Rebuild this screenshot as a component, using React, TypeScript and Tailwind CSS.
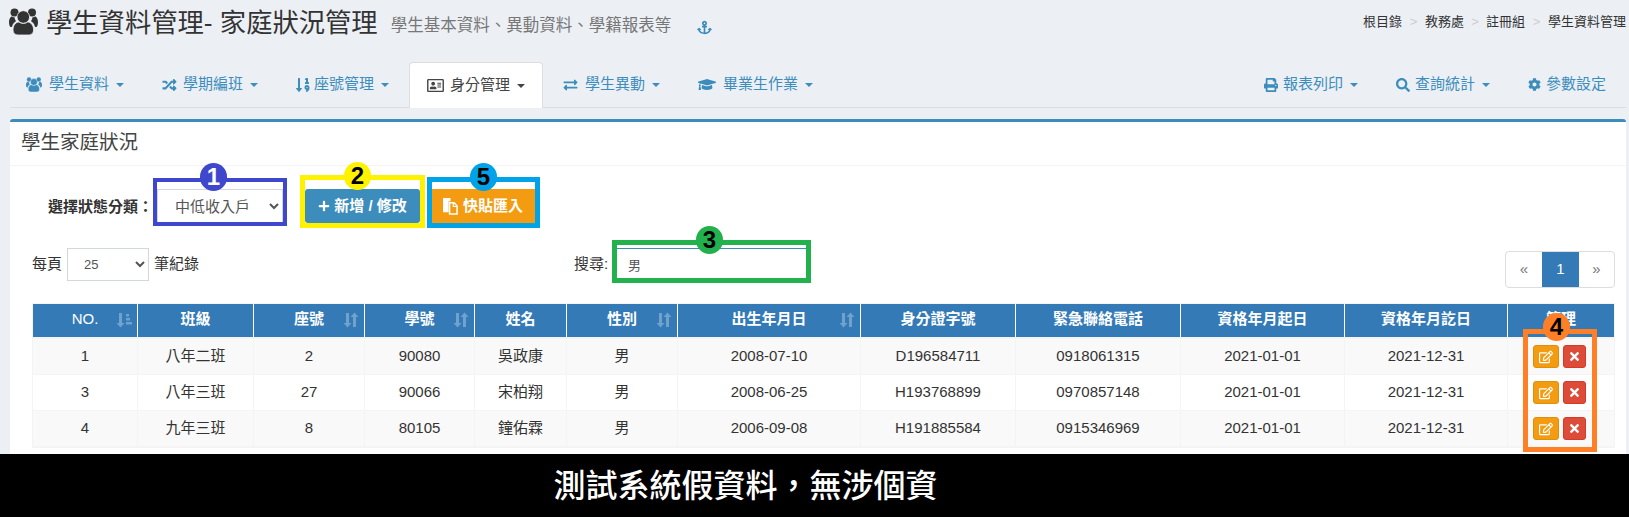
import { ReactNode } from "react";
import { IconType } from "react-icons";
import {
    FaAnchor,
    FaCog,
    FaExchangeAlt,
    FaGraduationCap,
    FaPlus,
    FaPrint,
    FaRandom,
    FaRegAddressCard,
    FaRegEdit,
    FaSearch,
    FaSortNumericDown,
    FaTimes,
} from "react-icons/fa";

const UsersIcon: IconType = ({ className }) => (
    <svg viewBox="0 0 29 27" fill="currentColor" className={className}>
        <circle cx="5.500" cy="4.500" r="4" />
        <circle cx="23" cy="4.500" r="4" />
        <path d="M0 14c0-3 1.500-5.500 3-5.500.5.300 1.500.8 2.500.8a8 8 0 0 0 1.500 4c-2 1-3.500 3-4 5.700H2C.8 19 0 17 0 14z" />
        <path d="M29 14c0-3-1.500-5.500-3-5.500-.5.300-1.500.8-2.500.8a8 8 0 0 1-1.500 4c2 1 3.500 3 4 5.700h1c1.200 0 2-2 2-5z" />
        <circle cx="14.300" cy="9" r="6.300" stroke="#ecf0f5" strokeWidth="0.800" />
        <path
            d="M4 22c0-5 3-8 6-8 1.500 1 3 1.500 4.300 1.500s2.800-.5 4.300-1.500c3 0 6 3 6 8 0 3-2 5-5 5H9c-3 0-5-2-5-5z"
            stroke="#ecf0f5"
            strokeWidth="0.800"
        />
    </svg>
);

const leftTabs: { text: string; Icon: IconType; iconClass: string; active?: boolean }[] = [
    { text: "學生資料", Icon: UsersIcon, iconClass: "w-[16px] h-[15px] mr-[7px]" },
    { text: "學期編班", Icon: FaRandom, iconClass: "w-[15px] h-[14px] mr-[6px]" },
    { text: "座號管理", Icon: FaSortNumericDown, iconClass: "w-[14px] h-[16px] mr-[4px]" },
    { text: "身分管理", Icon: FaRegAddressCard, iconClass: "w-[17px] h-[15px] mr-[6px]", active: true },
    { text: "學生異動", Icon: FaExchangeAlt, iconClass: "w-[15px] h-[14px] mr-[7px]" },
    { text: "畢業生作業", Icon: FaGraduationCap, iconClass: "w-[18px] h-[15px] mr-[7px]" },
];

const columns: { title: string; width: string; sort?: "asc" | "both"; latin?: boolean }[] = [
    { title: "NO.", width: "w-[105px]", sort: "asc", latin: true },
    { title: "班級", width: "w-[116px]" },
    { title: "座號", width: "w-[111px]", sort: "both" },
    { title: "學號", width: "w-[110px]", sort: "both" },
    { title: "姓名", width: "w-[92px]" },
    { title: "性別", width: "w-[111px]", sort: "both" },
    { title: "出生年月日", width: "w-[183px]", sort: "both" },
    { title: "身分證字號", width: "w-[155px]" },
    { title: "緊急聯絡電話", width: "w-[165px]" },
    { title: "資格年月起日", width: "w-[164px]" },
    { title: "資格年月訖日", width: "w-[163px]" },
    { title: "管理", width: "w-[106px]" },
];

const rows = [
    ["1", "八年二班", "2", "90080", "吳政康", "男", "2008-07-10", "D196584711", "0918061315", "2021-01-01", "2021-12-31"],
    ["3", "八年三班", "27", "90066", "宋柏翔", "男", "2008-06-25", "H193768899", "0970857148", "2021-01-01", "2021-12-31"],
    ["4", "九年三班", "8", "80105", "鐘佑霖", "男", "2006-09-08", "H191885584", "0915346969", "2021-01-01", "2021-12-31"],
];

const Caret = () => (
    <span className="ml-[7px] inline-block w-0 h-0 border-x-[4px] border-x-transparent border-t-[4px] border-t-current" />
);

const NavTab = ({
    text,
    Icon,
    iconClass,
    active,
    caret = true,
}: {
    text: string;
    Icon: IconType;
    iconClass: string;
    active?: boolean;
    caret?: boolean;
}) => (
    <div
        className={
            active
                ? "flex items-center h-[46px] px-[17px] -mx-[2px] bg-white text-[#444] border border-[#ddd] border-b-0 rounded-t-[4px] relative"
                : "flex items-center h-[45px] px-4 text-[#3c8dbc]"
        }
    >
        <Icon className={iconClass} />
        <span>{text}</span>
        {caret && <Caret />}
    </div>
);

const SortIcon = ({ kind }: { kind: "asc" | "both" }) => (
    <svg
        viewBox="0 0 16 16"
        className="absolute right-[5px] top-[8px] w-[16px] h-[16px] text-white opacity-30"
        fill="currentColor"
    >
        {kind === "asc" ? (
            <>
                <path d="M3 1h3v10h2.500L4.500 15.500 0.500 11H3z" />
                <path d="M10 2h3v2.500h-3zM10 6h4v2.500h-4zM10 10h6v2.500h-6z" />
            </>
        ) : (
            <>
                <path d="M3 1h3v10h2.500L4.500 15.500 0.500 11H3z" />
                <path d="M10 15V5H7.500l4-4.500 4 4.500H13v10z" />
            </>
        )}
    </svg>
);

const ActionButton = ({ color, children }: { color: string; children: ReactNode }) => (
    <span className={`inline-flex items-center justify-center h-[23px] rounded-[3px] text-white ${color}`}>{children}</span>
);

const Badge = ({ className, children }: { className: string; children: ReactNode }) => (
    <div
        className={`absolute flex items-center justify-center w-[27px] h-[28px] rounded-full text-[24px] font-bold leading-none ${className}`}
    >
        {children}
    </div>
);

export default function App() {
    return (
        <div className="relative flex flex-col w-[1629px] h-[517px] overflow-hidden bg-[#ecf0f5] font-['Liberation_Sans','Noto_Sans_CJK_TC',sans-serif] text-[15px] text-[#333]">
            {/* title */}
            <div className="flex items-center h-[62px] pl-[9px] pr-[3px] pb-[16px] shrink-0">
                <UsersIcon className="w-[29px] h-[27px] -mt-[4px] text-[#333]" />
                <h1 className="ml-[8px] text-[26.300px] leading-none text-[#333]">學生資料管理- 家庭狀況管理</h1>
                <span className="ml-[13px] mt-[4px] text-[16.500px] text-[#777]">學生基本資料、異動資料、學籍報表等</span>
                <FaAnchor className="ml-[26px] mt-[8px] w-[15px] h-[15px] text-[#3c8dbc]" />
                <div className="ml-auto flex items-center text-[13px] text-[#333] -mt-[2px]">
                    <span>根目錄</span>
                    <span className="w-[23px] text-center text-[#ccc]">&gt;</span>
                    <span>教務處</span>
                    <span className="w-[22px] text-center text-[#ccc]">&gt;</span>
                    <span>註冊組</span>
                    <span className="w-[23px] text-center text-[#ccc]">&gt;</span>
                    <span>學生資料管理</span>
                </div>
            </div>

            {/* tabs */}
            <div className="flex justify-between items-start h-[46px] mx-[10px] mr-[3px] border-b border-[#ddd] shrink-0">
                <div className="flex gap-[6px]">
                    {leftTabs.map((tab) => (
                        <NavTab key={tab.text} {...tab} />
                    ))}
                </div>
                <div className="flex gap-[6px] mr-[4px]">
                    <NavTab text="報表列印" Icon={FaPrint} iconClass="w-[14px] h-[14px] mr-[5px]" />
                    <NavTab text="查詢統計" Icon={FaSearch} iconClass="w-[14px] h-[14px] mr-[5px]" />
                    <NavTab text="參數設定" Icon={FaCog} iconClass="w-[13px] h-[13px] mr-[5px]" caret={false} />
                </div>
            </div>

            {/* panel */}
            <div className="flex-1 mt-[11px] ml-[10px] mr-[3px] bg-white border-t-[3px] border-[#3c8dbc] rounded-t-[3px] overflow-hidden">
                <div className="flex items-center h-[44px] pl-[11px] pb-[2px] text-[19.500px] text-[#444] border-b border-[#f4f4f4]">
                    學生家庭狀況
                </div>

                <div className="pl-[22px] pr-[11px] pt-[23px]">
                    <div className="flex items-start h-[59px]">
                        <label className="ml-[16px] mt-[7px] w-[109px] font-bold text-[#333] whitespace-nowrap">選擇狀態分類：</label>
                        <select className="w-[126px] h-[34px] pl-[13px] pr-[3px] bg-white border border-[#d2d6de] text-[#555]">
                            <option>中低收入戶</option>
                        </select>
                        <button className="flex items-center justify-center ml-[22px] w-[115px] h-[34px] bg-[#3c8dbc] rounded-[3px] font-bold text-white">
                            <FaPlus className="w-[12px] h-[12px] mr-[4px]" />
                            新增 / 修改
                        </button>
                        <button className="flex items-center justify-center ml-[11px] w-[104px] h-[34px] bg-[#f39c12] text-white font-bold">
                            <svg viewBox="0 0 16 18" className="w-[15px] h-[17px] mr-[5px]">
                                <path d="M0 0h8v3.500H6V15H0z" fill="currentColor" />
                                <path d="M7 5h5l3 3.500V17H7z" fill="none" stroke="currentColor" strokeWidth="1.600" />
                                <path d="M11 5v4h4" fill="none" stroke="currentColor" strokeWidth="1.300" />
                            </svg>
                            快貼匯入
                        </button>
                    </div>

                    <div className="flex items-start h-[56px]">
                        <span className="mt-[5px] w-[35px]">每頁</span>
                        <select className="w-[82px] h-[33px] pl-[12px] pr-[3px] bg-white border border-[#d2d6de] text-[13px] text-[#555]">
                            <option>25</option>
                        </select>
                        <span className="ml-[5px] mt-[5px] w-[47px]">筆紀錄</span>
                        <span className="ml-[373px] mt-[5px] w-[42px]">搜尋:</span>
                        <input
                            readOnly
                            value="男"
                            className="w-[192px] h-[32px] pl-[11px] border border-[#3c8dbc] text-[13px] text-[#555] outline-none"
                        />
                        <ul className="flex ml-auto mt-[3px] h-[37px] text-[#337ab7] border border-[#ddd] rounded-[4px]">
                            <li className="flex items-center justify-center w-[36px] text-[#777]">«</li>
                            <li className="flex items-center justify-center w-[37px] bg-[#337ab7] text-white">1</li>
                            <li className="flex items-center justify-center w-[35px] text-[#777]">»</li>
                        </ul>
                    </div>

                    <div className="border border-[#f4f4f4] w-[1583px] -mt-[1px]">
                        <table className="table-fixed w-full border-separate border-spacing-0 text-center text-[#333]">
                            <thead>
                                <tr>
                                    {columns.map((col) => (
                                        <th
                                            key={col.title}
                                            className={`relative h-[35px] pb-[2px] bg-[#337ab7] bg-clip-padding text-white border-b-2 border-b-[#f4f4f4] border-r border-r-white last:border-r-0 ${
                                                col.latin ? "font-normal" : "font-bold"
                                            } ${col.width}`}
                                        >
                                            {col.title}
                                            {col.sort && <SortIcon kind={col.sort} />}
                                        </th>
                                    ))}
                                </tr>
                            </thead>
                            <tbody>
                                {rows.map((row) => (
                                    <tr key={row[0]} className="odd:bg-[#f9f9f9]">
                                        {row.map((cell, i) => (
                                            <td key={i} className="h-[36px] border-r border-b border-[#f4f4f4]">
                                                {cell}
                                            </td>
                                        ))}
                                        <td className="h-[36px] border-b border-[#f4f4f4]">
                                            <div className="flex justify-center gap-[4px] pr-[3px]">
                                                <ActionButton color="w-[26px] bg-[#f39c12] border border-[#e08e0b]">
                                                    <FaRegEdit className="w-[14px] h-[14px]" />
                                                </ActionButton>
                                                <ActionButton color="w-[23px] bg-[#dd4b39] border border-[#d73925]">
                                                    <FaTimes className="w-[13px] h-[13px]" />
                                                </ActionButton>
                                            </div>
                                        </td>
                                    </tr>
                                ))}
                            </tbody>
                        </table>
                    </div>
                </div>
            </div>

            {/* caption bar */}
            <div className="flex items-center justify-center h-[63px] shrink-0 bg-black text-white text-[32px] font-medium pr-[138px]">
                測試系統假資料，無涉個資
            </div>

            {/* numbered marks drawn on top of the screenshot */}
            <div className="absolute left-[153px] top-[178px] w-[134px] h-[48px] border-[4px] border-[#3f48cc]" />
            <Badge className="left-[200px] top-[163px] bg-[#3f48cc] text-white">1</Badge>

            <div className="absolute left-[300px] top-[175px] w-[125px] h-[53px] border-[5px] border-[#fff200]" />
            <Badge className="left-[344px] top-[162px] bg-[#fff200] text-black">2</Badge>

            <div className="absolute left-[427px] top-[177px] w-[113px] h-[51px] border-[5px] border-[#00a2e8]" />
            <Badge className="left-[470px] top-[163px] bg-[#00a2e8] text-black">5</Badge>

            <div className="absolute left-[612px] top-[240px] w-[199px] h-[43px] border-[5px] border-[#22b14c]" />
            <Badge className="left-[696px] top-[226px] bg-[#22b14c] text-black">3</Badge>

            <div className="absolute left-[1523px] top-[329px] w-[74px] h-[123px] border-[5px] border-[#ff7f27]" />
            <Badge className="left-[1543px] top-[313px] bg-[#ff7f27] text-black">4</Badge>
        </div>
    );
}
